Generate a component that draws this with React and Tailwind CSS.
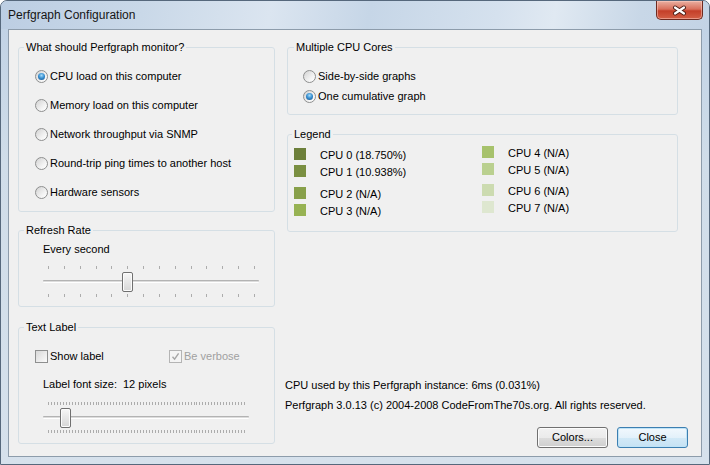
import React from "react";

const Radio = ({ checked }) => (
  <span className="flex h-[13px] w-[13px] shrink-0 items-center justify-center rounded-full border border-[#8e8f8f] bg-[linear-gradient(135deg,#d2d2d2,#f4f4f4_65%,#ffffff)]">
    {checked && (
      <span className="h-[7px] w-[7px] rounded-full bg-[radial-gradient(circle_at_50%_35%,#a6dbf8_0%,#3b93d4_45%,#124c85_100%)]" />
    )}
  </span>
);

const Checkbox = ({ checked, disabled }) => (
  <span
    className={
      disabled
        ? "flex h-[13px] w-[13px] shrink-0 items-center justify-center border border-[#b4b4b4] bg-[#f4f4f4]"
        : "flex h-[13px] w-[13px] shrink-0 items-center justify-center border border-[#8e8f8f] bg-[linear-gradient(135deg,#d8d8d8,#fbfbfb)]"
    }
  >
    {checked && (
      <svg width="9" height="9" viewBox="0 0 9 9">
        <path d="M1.5 4.8 L3.6 7.2 L7.6 1.4" fill="none" stroke="#a5a5a5" strokeWidth="1.4" />
      </svg>
    )}
  </span>
);

// ticks run from 5px to width-5px, thumb sits on tick number `value`
const Slider = ({ width, ticks, value }) => {
  const step = (width - 10) / (ticks - 1);
  const marks = Array.from({ length: ticks }, (_, i) => Math.round(5 + i * step));
  const thumb = Math.round(5 + value * step - 5.5);
  return (
    <div className="relative h-[34px]" style={{ width }}>
      {marks.map((x, i) => (
        <span key={"a" + i} className="absolute top-[2px] h-[3px] w-px bg-[#acacac]" style={{ left: x }} />
      ))}
      {marks.map((x, i) => (
        <span key={"b" + i} className="absolute top-[30px] h-[3px] w-px bg-[#acacac]" style={{ left: x }} />
      ))}
      <div className="absolute left-0 right-0 top-[16px] h-[3px] rounded-[1px] border-t border-b border-t-[#b3b3b3] border-b-white bg-[#dcdcdc]" />
      <div
        className="absolute top-[8px] h-[20px] w-[11px] rounded-[2px] border border-[#707070] bg-[linear-gradient(to_bottom,#f7f7f7,#e6e6e6_50%,#d6d6d6)] shadow-[inset_0_0_0_1px_#fbfbfb]"
        style={{ left: thumb }}
      />
    </div>
  );
};

const Group = ({ title, offset, className, children }) => (
  <fieldset className={"rounded-[3px] border border-[#d5dfe5] p-0 " + className}>
    <legend className={"px-[2px] leading-[14px] " + offset}>{title}</legend>
    {children}
  </fieldset>
);

const monitors = [
  "CPU load on this computer",
  "Memory load on this computer",
  "Network throughput via SNMP",
  "Round-trip ping times to another host",
  "Hardware sensors",
];

const legendLeft = [
  { name: "CPU 0 (18.750%)", color: "bg-[#6c7f3a]", gap: "" },
  { name: "CPU 1 (10.938%)", color: "bg-[#7a8f41]", gap: "" },
  { name: "CPU 2 (N/A)", color: "bg-[#88a04a]", gap: "mt-[5px]" },
  { name: "CPU 3 (N/A)", color: "bg-[#97b253]", gap: "" },
];

const legendRight = [
  { name: "CPU 4 (N/A)", color: "bg-[#a7c26c]", gap: "" },
  { name: "CPU 5 (N/A)", color: "bg-[#bad08f]", gap: "" },
  { name: "CPU 6 (N/A)", color: "bg-[#ccdbb0]", gap: "mt-[4px]" },
  { name: "CPU 7 (N/A)", color: "bg-[#dee7d0]", gap: "" },
];

const LegendItem = ({ item }) => (
  <div className={"flex h-[17px] items-center " + item.gap}>
    <span className={"-mt-[3px] h-[12px] w-[12px] shrink-0 " + item.color} />
    <span className="ml-[14px]">{item.name}</span>
  </div>
);

export default function App() {
  return (
    <div className="flex h-[465px] w-[710px] flex-col overflow-hidden rounded-t-[7px] border border-[#56687c] bg-[linear-gradient(to_bottom,#bfd1e5,#d0dde9_35%,#d6e1ec)] font-['Liberation_Sans',Arial,sans-serif] text-[11px] leading-[15px] text-black">
      {/* title bar */}
      <div className="flex h-[28px] shrink-0 items-center justify-between bg-[linear-gradient(100deg,#bccee3_0%,#c9d8e8_20%,#dbe5f0_38%,#c6d6e7_52%,#d5e1ee_70%,#e0e9f2_78%,#c8d7e7_90%,#c3d3e5_100%)]">
        <span className="pl-[7px] text-[12px] text-[#151515]">Perfgraph Configuration</span>
        <button className="mr-[6px] flex h-[19px] w-[47px] items-center justify-center self-start rounded-b-[5px] border border-t-0 border-[#6e2a20] bg-[linear-gradient(to_bottom,#eab0a2_0%,#d9705c_45%,#c43f29_55%,#d35f45_100%)] shadow-[inset_0_0_0_1px_rgba(255,210,200,0.5)]">
          <svg width="15" height="11" viewBox="0 0 15 11">
            <path d="M3 2.5 L12 8.5 M12 2.5 L3 8.5" stroke="#4a1d16" strokeWidth="4" strokeLinecap="round" />
            <path d="M3 2.5 L12 8.5 M12 2.5 L3 8.5" stroke="#ffffff" strokeWidth="2.2" strokeLinecap="round" />
          </svg>
        </button>
      </div>

      {/* client area */}
      <div className="mx-[7px] mb-[7px] flex flex-1 gap-[12px] border border-[#8d9cab] bg-[#f0f0f0] pb-[8px] pl-[9px] pr-[13px] pt-[10px]">
        {/* left column */}
        <div className="flex w-[257px] shrink-0 flex-col">
          <Group title="What should Perfgraph monitor?" offset="ml-[5px]" className="">
            <div className="pb-[4px] pl-[16px] pt-[8px]">
              {monitors.map((m, i) => (
                <div key={m} className="flex h-[29px] items-center gap-[2px]">
                  <Radio checked={i === 0} />
                  <span>{m}</span>
                </div>
              ))}
            </div>
          </Group>

          <Group title="Refresh Rate" offset="ml-[5px]" className="mt-[11px]">
            <div className="pb-[8px] pl-[24px] pt-[5px]">
              <div className="h-[15px]">Every second</div>
              <div className="mt-[7px]">
                <Slider width={216} ticks={14} value={5} />
              </div>
            </div>
          </Group>

          <Group title="Text Label" offset="ml-[5px]" className="mt-[13px]">
            <div className="pb-[9px] pt-[14px]">
              <div className="flex h-[17px] items-center pl-[16px]">
                <div className="flex w-[134px] items-center gap-[2px]">
                  <Checkbox />
                  <span>Show label</span>
                </div>
                <div className="flex items-center gap-[2px] text-[#a0a0a0]">
                  <Checkbox checked disabled />
                  <span>Be verbose</span>
                </div>
              </div>
              <div className="mt-[12px] pl-[24px]">
                Label font size:<span className="ml-[6px]">12 pixels</span>
              </div>
              <div className="mt-[8px] pl-[24px]">
                <Slider width={206} ticks={67} value={6} />
              </div>
            </div>
          </Group>
        </div>

        {/* right column */}
        <div className="flex flex-1 flex-col">
          <Group title="Multiple CPU Cores" offset="ml-[6px]" className="mr-[10px]">
            <div className="pb-[8px] pl-[15px] pt-[12px]">
              <div className="flex h-[20px] items-center gap-[2px]">
                <Radio />
                <span>Side-by-side graphs</span>
              </div>
              <div className="flex h-[20px] items-center gap-[2px]">
                <Radio checked />
                <span>One cumulative graph</span>
              </div>
            </div>
          </Group>

          <Group title="Legend" offset="ml-[4px]" className="mr-[10px] mt-[12px]">
            <div className="flex pb-[11px] pl-[6px]">
              <div className="w-[188px] pt-[6px]">
                {legendLeft.map((it) => (
                  <LegendItem key={it.name} item={it} />
                ))}
              </div>
              <div className="pt-[4px]">
                {legendRight.map((it) => (
                  <LegendItem key={it.name} item={it} />
                ))}
              </div>
            </div>
          </Group>

          <div className="flex-1" />

          <div className="-ml-[2px] leading-[20px]">
            <div>CPU used by this Perfgraph instance: 6ms (0.031%)</div>
            <div>Perfgraph 3.0.13 (c) 2004-2008 CodeFromThe70s.org. All rights reserved.</div>
          </div>

          <div className="mt-[12px] flex justify-end gap-[9px]">
            <button className="h-[21px] w-[71px] rounded-[3px] border border-[#707070] bg-[linear-gradient(to_bottom,#f2f2f2_0%,#ebebeb_50%,#dddddd_50%,#cfcfcf_100%)] shadow-[inset_0_0_0_1px_#fcfcfc]">
              Colors...
            </button>
            <button className="h-[21px] w-[71px] rounded-[3px] border border-[#3c7fb1] bg-[linear-gradient(to_bottom,#f1f8fd_0%,#e3f1fa_50%,#d2e9f7_50%,#c5e2f4_100%)] shadow-[inset_0_0_0_1px_#bfe3f7]">
              Close
            </button>
          </div>
        </div>
      </div>
    </div>
  );
}
